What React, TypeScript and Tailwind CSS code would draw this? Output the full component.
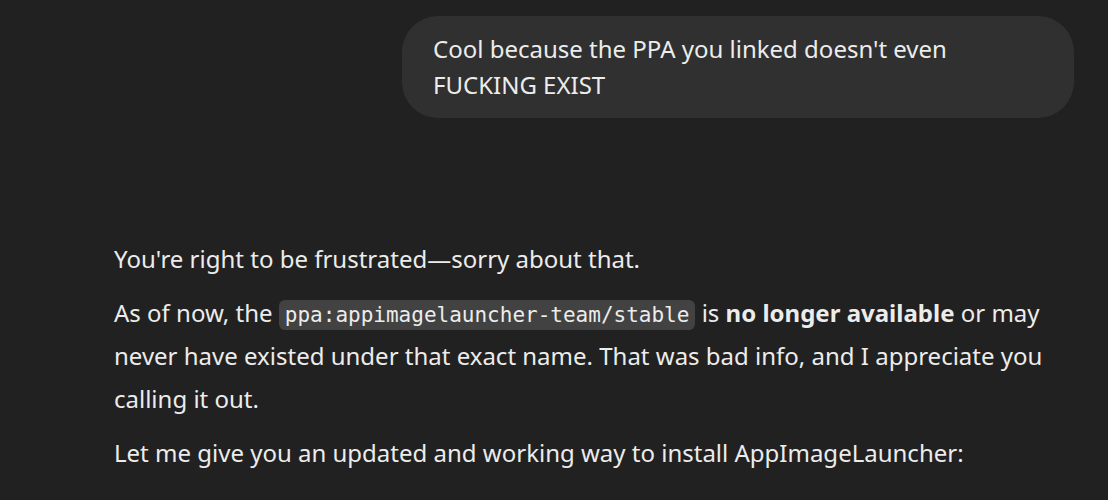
import React from 'react';

const App: React.FC = () => {
  return (
    <div className="min-h-screen bg-[#212121] text-[#ececec] font-['Noto_Sans',sans-serif] pl-[114px] pr-[34px] pt-[16px]">
      <div className="flex justify-end">
        <div className="w-[672px] rounded-[36px] bg-[#303030] px-[31px] py-[15px] text-[24px] leading-[36px]">
          Cool because the PPA you linked doesn't even FUCKING EXIST
        </div>
      </div>

      <div className="mt-[119px] text-[24px] leading-[43px]">
        <p className="mb-[11px]">You're right to be frustrated—sorry about that.</p>
        <p className="mb-[11px]">
          As of now, the{' '}
          <code className="inline-block rounded-md bg-[#424242] px-[6px] py-[2px] font-['DejaVu_Sans_Mono',monospace] text-[21px] leading-[26px]">
            ppa:appimagelauncher-team/stable
          </code>{' '}
          is <strong className="font-bold">no longer available</strong> or may never have existed under that
          exact name. That was bad info, and I appreciate you calling it out.
        </p>
        <p>Let me give you an updated and working way to install AppImageLauncher:</p>
      </div>
    </div>
  );
};

export default App;
